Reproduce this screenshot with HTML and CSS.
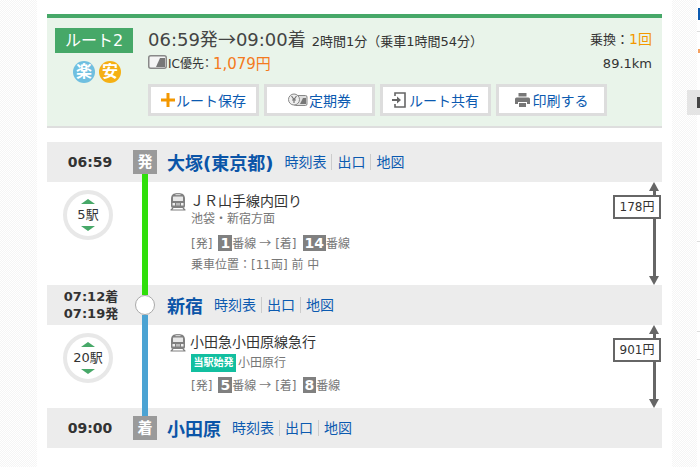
FILE: index.html
```html
<!DOCTYPE html>
<html lang="ja">
<head>
<meta charset="utf-8">
<title>ルート2</title>
<link rel="stylesheet" href="styles.css">
</head>
<body>
<div class="page">
  <div class="strip strip-left"></div>
  <main class="main">
    <section class="summary">
      <div class="route-col">
        <div class="route-label">ルート2</div>
        <div class="route-marks">
          <span class="mark mark-blue">楽</span><span class="mark mark-orange">安</span>
        </div>
      </div>
      <div class="summary-body">
        <div class="summary-top">
          <div class="summary-text">
            <div class="times"><span class="times-main">06:59発<span class="cjk">→</span>09:00着</span><span class="times-sub">2時間1分（乗車1時間54分）</span></div>
            <div class="price-line">
              <svg class="ic-card" width="19" height="14" viewBox="0 0 19 14"><rect x="0.75" y="0.75" width="17.5" height="12.5" rx="2" fill="#f4f4f4" stroke="#888" stroke-width="1.5"/><path d="M8 12 L12 3 H17 V12 Z" fill="#777"/></svg>
              <span class="price-label">IC優先：</span><span class="price">1,079円</span>
            </div>
          </div>
          <div class="summary-right">
            <div class="transfer">乗換：<span class="accent">1回</span></div>
            <div class="distance">89.1km</div>
          </div>
        </div>
        <div class="buttons">
          <a class="btn"><svg width="14" height="14" viewBox="0 0 14 14"><path d="M5.500 0h3v5.500H14v3H8.500V14h-3V8.500H0v-3h5.500z" fill="#f39800"/></svg>ルート保存</a>
          <a class="btn"><svg width="20" height="14" viewBox="0 0 20 14"><rect x="6" y="2.500" width="13" height="10" rx="1.500" fill="#ddd" stroke="#888"/><path d="M12 11 L15 5 H18 V11 Z" fill="#777"/><circle cx="6" cy="6.500" r="5.500" fill="#eee" stroke="#888"/><path d="M3.500 3 L6 6.500 L8.500 3 M6 6.500 V10 M4 7 H8" fill="none" stroke="#777" stroke-width="1.200"/></svg>定期券</a>
          <a class="btn btn-wide-gap"><svg width="14" height="16" viewBox="0 0 14 16"><path d="M3 4V1h10v14H3v-3" fill="none" stroke="#666" stroke-width="1.600"/><path d="M0 7h5V4.500L9 8 5 11.500V9H0z" fill="#666"/></svg>ルート共有</a>
          <a class="btn btn-wide-gap"><svg width="15" height="14" viewBox="0 0 15 14"><path d="M3.500 0h8v3.500h-8z" fill="#777"/><path d="M1.500 4.500h12a1.500 1.500 0 0 1 1.500 1.500v5h-3V9H3v2H0V6a1.500 1.500 0 0 1 1.500-1.500z" fill="#777"/><path d="M4 10h7v4H4z" fill="#777"/></svg>印刷する</a>
        </div>
      </div>
    </section>

    <div class="station station-first">
      <div class="st-time">06:59</div>
      <div class="st-node"><span class="badge">発</span></div>
      <div class="st-name">大塚(東京都)</div>
      <div class="st-links"><a>時刻表</a><a>出口</a><a>地図</a></div>
    </div>

    <div class="leg leg-tall">
      <div class="leg-left">
        <div class="count"><i class="tri tri-up"></i><span>5駅</span><i class="tri tri-down"></i></div>
      </div>
      <div class="rail rail-green"></div>
      <div class="leg-info">
        <div class="line-title">
          <svg class="train" width="16" height="19" viewBox="0 0 16 19"><path d="M1 7C1 3 3 1 8 1s7 2 7 6v7a2 2 0 0 1-2 2H3a2 2 0 0 1-2-2z" fill="#808080"/><rect x="3" y="4.500" width="10" height="4.500" rx="0.500" fill="#e8e8e8"/><rect x="5.500" y="1.800" width="5" height="1.400" fill="#d0d0d0"/><rect x="2.500" y="11" width="2.500" height="2.500" fill="#eee"/><rect x="11" y="11" width="2.500" height="2.500" fill="#eee"/><rect x="6" y="11" width="4" height="2.500" fill="#bbb"/><path d="M0.500 18h15M3 16l-2 2M13 16l2 2" stroke="#808080" stroke-width="1.200" fill="none"/></svg>
          <span class="line-name">ＪＲ山手線内回り</span>
        </div>
        <div class="dest">池袋・新宿方面</div>
        <div class="platform">[発]<b class="num">1</b>番線<span class="cjk plat-arrow">→</span>[着]<b class="num">14</b>番線</div>
        <div class="position">乗車位置：[11両] 前 中</div>
      </div>
      <div class="fare">
        <svg class="head" width="10" height="9" viewBox="0 0 10 9"><path d="M5 0l5 9H0z" fill="#666"/></svg>
        <i class="stem stem-short"></i>
        <div class="fare-box">178円</div>
        <i class="stem stem-long"></i>
        <svg class="head" width="10" height="9" viewBox="0 0 10 9"><path d="M5 9L0 0h10z" fill="#666"/></svg>
      </div>
    </div>

    <div class="station">
      <div class="st-time st-time-double">07:12着<br>07:19発</div>
      <div class="st-node"><span class="circle"></span></div>
      <div class="st-name">新宿</div>
      <div class="st-links"><a>時刻表</a><a>出口</a><a>地図</a></div>
    </div>

    <div class="leg leg-short">
      <div class="leg-left">
        <div class="count"><i class="tri tri-up"></i><span>20駅</span><i class="tri tri-down"></i></div>
      </div>
      <div class="rail rail-blue"></div>
      <div class="leg-info leg-info-short">
        <div class="line-title">
          <svg class="train" width="16" height="19" viewBox="0 0 16 19"><path d="M1 7C1 3 3 1 8 1s7 2 7 6v7a2 2 0 0 1-2 2H3a2 2 0 0 1-2-2z" fill="#808080"/><rect x="3" y="4.500" width="10" height="4.500" rx="0.500" fill="#e8e8e8"/><rect x="5.500" y="1.800" width="5" height="1.400" fill="#d0d0d0"/><rect x="2.500" y="11" width="2.500" height="2.500" fill="#eee"/><rect x="11" y="11" width="2.500" height="2.500" fill="#eee"/><rect x="6" y="11" width="4" height="2.500" fill="#bbb"/><path d="M0.500 18h15M3 16l-2 2M13 16l2 2" stroke="#808080" stroke-width="1.200" fill="none"/></svg>
          <span class="line-name">小田急小田原線急行</span>
        </div>
        <div class="dest dest-tagged"><span class="tag">当駅始発</span>小田原行</div>
        <div class="platform platform-tight">[発]<b class="num">5</b>番線<span class="cjk plat-arrow">→</span>[着]<b class="num">8</b>番線</div>
      </div>
      <div class="fare">
        <svg class="head" width="10" height="9" viewBox="0 0 10 9"><path d="M5 0l5 9H0z" fill="#666"/></svg>
        <i class="stem stem-short"></i>
        <div class="fare-box">901円</div>
        <i class="stem stem-long"></i>
        <svg class="head" width="10" height="9" viewBox="0 0 10 9"><path d="M5 9L0 0h10z" fill="#666"/></svg>
      </div>
    </div>

    <div class="station">
      <div class="st-time">09:00</div>
      <div class="st-node"><span class="badge">着</span></div>
      <div class="st-name">小田原</div>
      <div class="st-links"><a>時刻表</a><a>出口</a><a>地図</a></div>
    </div>
  </main>
  <aside class="strip strip-right">
    <div class="side-panel">
      <i class="side-link"></i>
      <i class="side-rule side-rule-top"></i>
      <i class="side-price"></i>
      <div class="side-block"><i class="side-block-mark"></i></div>
      <i class="side-rule side-rule-a"></i>
      <i class="side-rule side-rule-b"></i>
      <i class="side-rule side-rule-c"></i>
    </div>
  </aside>
</div>
</body>
</html>
```
FILE: styles.css
```css
* { box-sizing: border-box; }
html, body { margin: 0; padding: 0; background: #fff; }
body {
  font-family: "DejaVu Sans", "Noto Sans CJK JP", sans-serif;
  color: #333;
  overflow: hidden;
}
.cjk { font-family: "Noto Sans CJK JP", sans-serif; }
.page { display: flex; width: 700px; height: 467px; overflow: hidden; }
.strip {
  background: repeating-conic-gradient(#f5f5f5 0 25%, #fff 0 50%) 0 0 / 2px 2px;
}
.strip-left { width: 37px; flex: none; }
.strip-right { width: 28px; flex: none; padding-left: 25px; }
.side-panel { display: flex; flex-direction: column; height: 467px; background: #fff; }
.side-panel i { display: block; flex: none; }
.side-link { width: 2px; height: 12px; margin: 8px 0 0 1px; background: #0b5ab0; }
.side-rule { height: 1px; background: #ddd; }
.side-rule-top { margin-top: 11px; }
.side-price { width: 2px; height: 4px; margin: 17px 0 0 1px; background: #f4a060; }
.side-block {
  display: flex;
  align-items: center;
  justify-content: flex-end;
  flex: none;
  width: 13px;
  height: 25px;
  margin: 37px 0 0 -10px;
  background: #e4e4e4;
}
.side-block-mark { width: 3px; height: 11px; background: #444; }
.side-rule-a { margin-top: 126px; }
.side-rule-b { margin-top: 89px; }
.side-rule-c { margin-top: 27px; }
.main { width: 635px; flex: none; padding: 14px 10px 0; background: #fff; }

/* summary */
.summary {
  display: flex;
  height: 114px;
  margin-bottom: 14px;
  padding: 10px 10px 0 8px;
  background: #e9f4ea;
  border-top: 4px solid #46a868;
  border-bottom: 2px solid #dedede;
}
.route-col { width: 78px; flex: none; margin-right: 15px; }
.route-label {
  height: 25px;
  background: #46a868;
  color: #fff;
  font-size: 16px;
  line-height: 25px;
  text-align: center;
}
.route-marks { display: flex; justify-content: center; gap: 4px; margin: 8px 0 0 6px; }
.mark {
  width: 22px; height: 22px;
  border-radius: 50%;
  color: #fff;
  font-size: 16px;
  font-weight: 700;
  line-height: 22px;
  text-align: center;
}
.mark-blue { background: #6fbfe0; }
.mark-orange { background: #f5b014; }
.summary-body { flex: 1; min-width: 0; }
.summary-top { display: flex; justify-content: space-between; height: 56px; }
.times { display: flex; align-items: baseline; gap: 6px; height: 26px; margin-top: -3px; }
.times-main { font-size: 18px; color: #444; }
.times-sub { font-size: 13px; }
.price-line { display: flex; align-items: center; height: 22px; }
.ic-card { margin-right: 1px; }
.price-label { font-size: 12px; font-feature-settings: "palt"; }
.price { margin-left: 3px; font-size: 15px; color: #f47a20; }
.summary-right { padding-top: 1px; text-align: right; font-size: 13px; }
.transfer { height: 26px; line-height: 20px; }
.accent { color: #f39800; font-size: 14px; }
.distance { line-height: 18px; }
.buttons { display: flex; gap: 5px; }
.btn {
  display: flex;
  align-items: center;
  justify-content: center;
  gap: 1px;
  width: 111px;
  height: 32px;
  background: #fff;
  border: 3px solid #dddddd;
  color: #0b5ab0;
  font-size: 14px;
}
.btn-wide-gap { gap: 3px; }

/* stations */
.station {
  display: flex;
  align-items: center;
  height: 40px;
  background: #ececec;
}
.st-time {
  width: 86px;
  flex: none;
  text-align: center;
  font-size: 14px;
  font-weight: 700;
  line-height: 17px;
}
.st-time-double { padding-left: 2px; font-size: 13px; }
.st-node { width: 24px; flex: none; display: flex; justify-content: center; }
.badge {
  width: 24px; height: 24px;
  background: #9a9a9a;
  color: #fff;
  font-size: 15px;
  font-weight: 700;
  line-height: 24px;
  text-align: center;
}
.circle {
  position: relative;
  z-index: 1;
  width: 20px; height: 20px;
  background: #fff;
  border: 1px solid #aaa;
  border-radius: 50%;
}
.st-name {
  margin-left: 10px;
  color: #0b55a8;
  font-size: 18px;
  font-weight: 700;
}
.st-links { display: flex; margin-left: 11px; font-size: 14px; color: #0b5ab0; }
.st-links a { padding: 0 5px; border-left: 1px solid #ccc; line-height: 16px; }
.st-links a:first-child { padding-left: 0; border-left: 0; }

/* legs */
.leg { display: flex; }
.leg-tall { height: 103px; }
.leg-short { height: 83px; }
.leg-left { width: 95px; flex: none; padding: 8px 0 0 16px; }
.count {
  display: flex;
  flex-direction: column;
  align-items: center;
  justify-content: center;
  gap: 3px;
  width: 50px; height: 50px;
  background: #fff;
  border: 4px solid #e8e8e8;
  border-radius: 50%;
  font-size: 13px;
  line-height: 16px;
}
.tri { width: 0; height: 0; border-left: 7px solid transparent; border-right: 7px solid transparent; }
.tri-up { border-bottom: 5px solid #47a868; }
.tri-down { border-top: 5px solid #47a868; }
.rail { position: relative; width: 6px; flex: none; }
.rail::before, .rail::after { content: ""; position: absolute; left: 0; width: 6px; background: inherit; }
.rail-green { background: #2fdf0a; }
.rail-green::before { top: -8px; height: 8px; }
.rail-green::after { bottom: -10px; height: 10px; }
.rail-blue { background: #4ba3d3; }
.rail-blue::before { top: -10px; height: 10px; }
.rail-blue::after { bottom: -8px; height: 8px; }
.leg-info { flex: 1; padding: 9px 0 0 22px; min-width: 0; }
.leg-info-short { padding-top: 7px; }
.line-title { display: flex; align-items: center; gap: 4px; height: 20px; }
.line-name { font-size: 14px; line-height: 20px; }
.dest { font-size: 12px; color: #777; line-height: 16px; margin: 0 0 0 21px; }
.dest-tagged { display: flex; align-items: center; height: 18px; margin-top: 2px; }
.tag {
  width: 45px; height: 18px;
  margin-right: 2px;
  background: #12bfa0;
  color: #fff;
  font-size: 10px;
  font-weight: 700;
  line-height: 18px;
  text-align: center;
}
.platform { font-size: 12px; color: #777; line-height: 16px; margin: 8px 0 0 21px; }
.platform-tight { margin-top: 5px; }
.plat-arrow { margin: 0 4px 0 3px; }
.num {
  display: inline-block;
  margin: 0 0 0 6px;
  padding: 0 2px;
  background: #808080;
  color: #fff;
  font-size: 14px;
  line-height: 16px;
}
.position { font-size: 12px; color: #777; line-height: 16px; margin: 5px 0 0 21px; }

/* fare */
.fare { display: flex; flex-direction: column; align-items: flex-end; width: 50px; flex: none; }
.head { margin-right: 3px; flex: none; }
.stem { display: block; width: 3px; background: #666; margin-right: 6.500px; }
.stem-short { height: 4px; }
.stem-long { flex: 1; }
.fare-box {
  width: 48px; height: 24px;
  flex: none;
  margin-right: 1px;
  background: #fff;
  border: 2px solid #666;
  font-size: 12px;
  line-height: 20px;
  text-align: center;
}
```
